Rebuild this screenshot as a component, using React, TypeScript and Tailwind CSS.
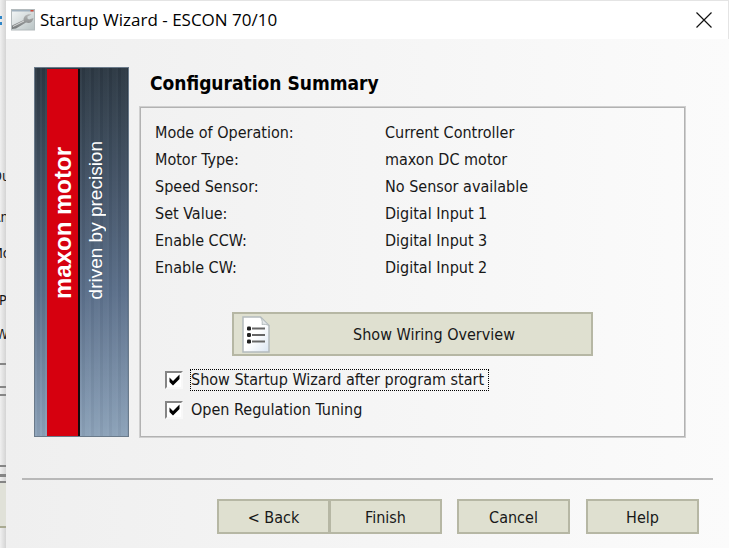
import { useState, type ReactNode } from "react";

const summary = [
  ["Mode of Operation:", "Current Controller"],
  ["Motor Type:", "maxon DC motor"],
  ["Speed Sensor:", "No Sensor available"],
  ["Set Value:", "Digital Input 1"],
  ["Enable CCW:", "Digital Input 3"],
  ["Enable CW:", "Digital Input 2"],
];

function PushButton({ children, className = "" }: { children: ReactNode; className?: string }) {
  return (
    <button
      type="button"
      className={`h-[35px] w-[113px] border border-[#b6b7a4] bg-[#dfe0d0] pt-0.5 text-center inset-ring inset-ring-[#b6b7a4] ${className}`}
    >
      {children}
    </button>
  );
}

function CheckOption({ id, label, focused = false }: { id: string; label: string; focused?: boolean }) {
  const [checked, setChecked] = useState(true);
  return (
    <div className="flex h-[30px] items-center">
      <span className="grid">
        <input
          id={id}
          type="checkbox"
          checked={checked}
          onChange={(e) => setChecked(e.target.checked)}
          className="peer col-start-1 row-start-1 size-[18px] appearance-none border-2 border-t-[#858585] border-r-[#f8f8f8] border-b-[#f8f8f8] border-l-[#858585] bg-white"
        />
        <svg
          viewBox="0 0 18 18"
          className="pointer-events-none invisible col-start-1 row-start-1 size-[18px] peer-checked:visible"
          aria-hidden="true"
        >
          <path d="M4.500 6.500 L8 10 L14.500 3.500 V8 L8 14.500 L4.500 11 Z" fill="#000" />
        </svg>
      </span>
      <label
        htmlFor={id}
        className={`ml-[7px] border pr-1 leading-5 ${focused ? "border-dotted border-black" : "border-transparent"}`}
      >
        {label}
      </label>
    </div>
  );
}

function WizardIcon() {
  return (
    <svg viewBox="0 0 24 22" className="h-[22px] w-6" aria-hidden="true">
      <defs>
        <linearGradient id="pane" x1="0" y1="0" x2="1" y2="1">
          <stop offset="0" stopColor="#f4f7f7" />
          <stop offset="1" stopColor="#b9c3c4" />
        </linearGradient>
        <linearGradient id="steel" x1="0" y1="0" x2="0" y2="1">
          <stop offset="0" stopColor="#b4b6b6" />
          <stop offset="1" stopColor="#747879" />
        </linearGradient>
      </defs>
      <rect x="0.500" y="0.500" width="23" height="20.500" fill="url(#pane)" stroke="#b3babc" />
      <rect x="1" y="1" width="22" height="1.500" fill="#9fb0bd" />
      <rect x="19.500" y="1" width="3" height="1.500" fill="#d04a3a" />
      <path
        d="M1 20 V16.500 L12.500 11 C12.500 7 16 4.500 20.500 5.500 L16.500 7.500 L16.500 9.500 L18 10.500 L22.500 9 C22 13 18.500 15 15 13.500 L5 19.500 Z"
        fill="url(#steel)"
      />
      <path d="M2 17.500 L13 12" stroke="#d8dada" strokeWidth="1" />
    </svg>
  );
}

function ListPageIcon() {
  return (
    <svg viewBox="0 0 28 37" className="h-[37px] w-7" aria-hidden="true">
      <defs>
        <linearGradient id="page" x1="0" y1="0" x2="1" y2="1">
          <stop offset="0.500" stopColor="#ffffff" />
          <stop offset="1" stopColor="#dae5f2" />
        </linearGradient>
      </defs>
      <path d="M1 1 H18.500 L27 9.500 V36 H1 Z" fill="url(#page)" stroke="#b4bbbd" strokeWidth="1.500" />
      <path d="M18.500 1 C20.500 4 20.500 7 20 8.500 C22.500 8 25 8.500 27 9.500 Z" fill="#e4e8ea" stroke="#b4bcbe" />
      <g fill="#222">
        <rect x="5" y="10.500" width="4" height="4" rx="1.200" />
        <rect x="5" y="17" width="4" height="4" rx="1.200" />
        <rect x="5" y="23.500" width="4" height="4" rx="1.200" />
      </g>
      <path d="M10 12.500 H23 M10 19 H23 M10 25.500 H23" stroke="#666" strokeWidth="1.800" />
    </svg>
  );
}

function Banner() {
  return (
    <aside className="flex h-[370px] w-[95px] shrink-0 border border-[#6a7a8a] bg-linear-to-b from-[#2c3843] via-[#5a6e89] via-60% to-[#8ca2b9] font-['Liberation_Sans',Arial,sans-serif] text-white">
      <div className="w-3 bg-[repeating-linear-gradient(90deg,#ffffff08_0_2px,#00000008_2px_5px)]" />
      <div className="mt-px flex w-[33px] items-center justify-end border-r-2 border-[#17090c] bg-[#d6000f]">
        <strong className="mt-auto mb-[137px] rotate-180 text-[24px] leading-[30px] font-bold [writing-mode:vertical-rl]">
          maxon motor
        </strong>
      </div>
      <div className="flex flex-1 bg-[repeating-linear-gradient(90deg,#ffffff08_0_2px,#00000008_2px_5px,#ffffff05_5px_9px)]">
        <span className="mt-auto mb-[137px] ml-0.5 rotate-180 text-[19px] leading-7 [writing-mode:vertical-rl]">
          driven by precision
        </span>
      </div>
    </aside>
  );
}

function WindowBehind() {
  return (
    <div
      className="flex w-[6px] shrink-0 flex-col overflow-hidden bg-linear-to-r from-[#f0f0f0] to-[#d4d4d4] text-[14px] leading-5 whitespace-nowrap"
      aria-hidden="true"
    >
      <div className="mt-4 h-[9px] w-[2px] border-y-[3px] border-[#2f86c8]" />
      <span className="mt-[141px] -ml-2">Ou</span>
      <span className="mt-[21px] -ml-2">An</span>
      <span className="mt-4 -ml-2">Mo</span>
      <span className="mt-[27px] -ml-px">P</span>
      <span className="mt-[14px] -ml-1">W</span>
      <div className="mt-[19px] h-[25px] border-t-2 border-b-2 border-[#858585]" />
      <div className="mt-[6px] h-[73px] border-t-2 border-b-2 border-[#858585]" />
      <div className="mt-[7px] h-[9px] border-t-[3px] border-b-2 border-[#858585]" />
      <div className="h-[45px] border-b-2 border-[#a9aa92] bg-[#e0e1d8]" />
    </div>
  );
}

export default function App() {
  return (
    <div className="flex min-h-screen bg-[#e4e4e4] font-['DejaVu_Sans_Condensed','DejaVu_Sans',Tahoma,sans-serif] text-[16px] text-[#181818]">
      <WindowBehind />
      <main className="mt-px flex min-w-0 flex-1 flex-col bg-linear-to-r from-[#efefef] to-[#fbfbfb]">
        <header className="flex h-[38px] items-center border-r border-[#e4e4e4] bg-white pr-4 pl-[5px] font-['Open_Sans','Segoe_UI',sans-serif]">
          <WizardIcon />
          <h1 className="ml-[5px] flex-1 text-[17px] text-black">Startup Wizard - ESCON 70/10</h1>
          <button type="button" aria-label="Close">
            <svg viewBox="0 0 16 16" className="size-4" aria-hidden="true">
              <path d="M0.500 0.500 L15.500 15.500 M15.500 0.500 L0.500 15.500" stroke="#111" strokeWidth="1.200" />
            </svg>
          </button>
        </header>

        <div className="flex pt-7 pr-11 pl-7">
          <Banner />
          <section className="ml-[11px] flex min-w-0 flex-1 flex-col">
            <h2 className="ml-[10px] h-10 text-[19px] leading-8 font-bold text-black">Configuration Summary</h2>
            <div className="flex-1 border border-[#b2b2b2] pt-[11px] pl-[14px] ring ring-[#cfcfcf]">
              <dl className="grid grid-cols-[230px_1fr] leading-[27px]">
                {summary.map(([name, value]) => (
                  <div key={name} className="contents">
                    <dt>{name}</dt>
                    <dd>{value}</dd>
                  </div>
                ))}
              </dl>
              <button
                type="button"
                className="mt-[31px] ml-[77px] flex h-11 w-[361px] items-center border border-[#b6b7a4] bg-[#dfe0d0] pl-[9px] inset-ring inset-ring-[#b6b7a4]"
              >
                <ListPageIcon />
                <span className="flex-1 pt-px pl-[6px] text-center">Show Wiring Overview</span>
              </button>
              <div className="mt-[9px] ml-[10px]">
                <CheckOption id="show-wizard" label="Show Startup Wizard after program start" focused />
                <CheckOption id="open-tuning" label="Open Regulation Tuning" />
              </div>
            </div>
          </section>
        </div>

        <hr className="mt-[41px] mr-4 ml-4 border-t-2 border-[#b8b8b8]" />
        <footer className="flex justify-end pt-[19px] pr-[30px]">
          <PushButton>&lt; Back</PushButton>
          <PushButton className="-ml-px">Finish</PushButton>
          <PushButton className="ml-[15px]">Cancel</PushButton>
          <PushButton className="ml-4">Help</PushButton>
        </footer>
      </main>
    </div>
  );
}
